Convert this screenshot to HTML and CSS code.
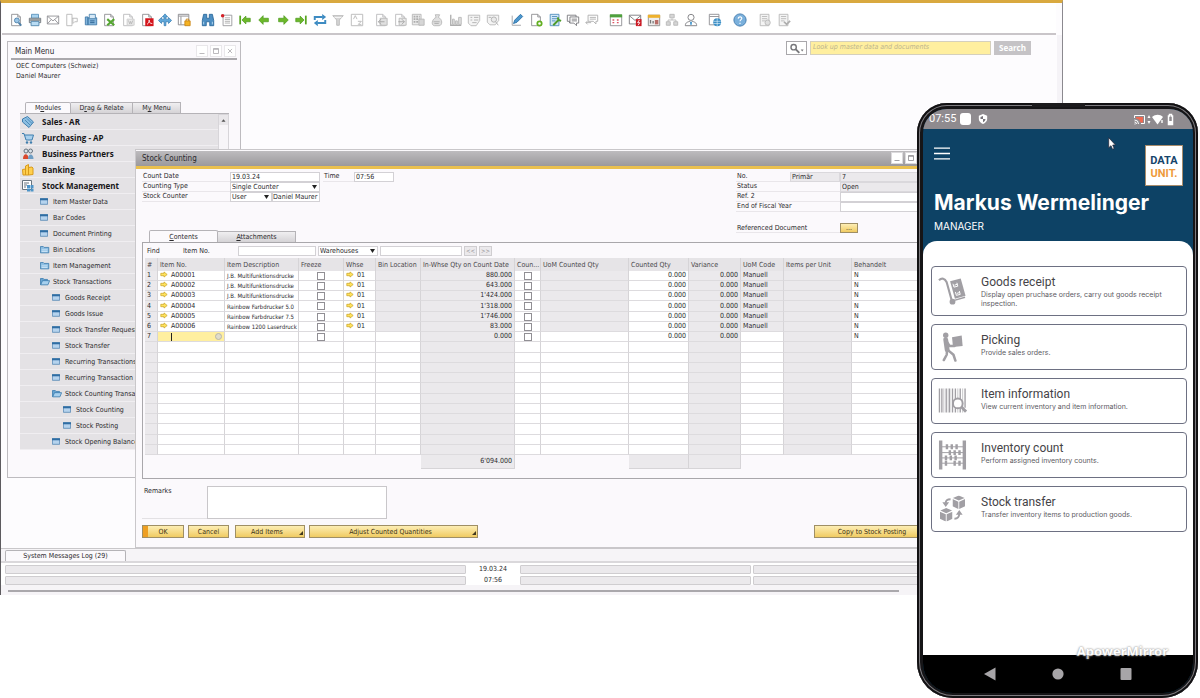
FILE: index.html
```html
<!DOCTYPE html>
<html lang="en">
<head>
<meta charset="utf-8">
<title>Stock Counting</title>
<link rel="stylesheet" href="styles.css">
</head>
<body>
<svg class="defs" aria-hidden="true">
  <symbol id="page" viewBox="0 0 16 16"><path d="M3 1.500h7l3 3v10H3z" fill="#fff" stroke="#8d8d90"/><path d="M10 1.500v3h3" fill="none" stroke="#8d8d90"/></symbol>
  <symbol id="win" viewBox="0 0 10 8"><path d="M.5.5h9v7h-9z" fill="#b5d3ee" stroke="#5487b2"/><path d="M0 0h10v2.500H0z" fill="#2f6da3"/></symbol>
  <symbol id="folder" viewBox="0 0 12 10"><path d="M.5 9V1.500h3.500l1 1h5.500V9z" fill="#8fbfe3" stroke="#3b7cae"/><path d="M2 5.500h7M2 7.500h7" stroke="#d8ecfa"/></symbol>
  <symbol id="open" viewBox="0 0 12 10"><path d="M.5 9V1.500h3.500l1 1h4V4" fill="#6aa6d2" stroke="#3b7cae"/><path d="M.8 9l2.200-5h8.500L9.500 9z" fill="#a7d0ee" stroke="#3b7cae"/></symbol>
  <symbol id="arrow" viewBox="0 0 10 8"><path d="M1 2.500h4V.8L9 4 5 7.200V5.500H1z" fill="#ffe45c" stroke="#c9a227" stroke-width=".9"/></symbol>
  <symbol id="left" viewBox="0 0 16 16"><path d="M2 8l5-5v3h6v4H7v3z" fill="#6cb82a" stroke="#4c9a1c" stroke-width=".8"/></symbol>
  <symbol id="cube" viewBox="0 0 14 15"><path d="M7 0l6.500 2.800L7 5.700.5 2.800z"/><path d="M0 4l6.500 2.900V15L0 12zM14 4L7.500 6.900V15L14 12z"/></symbol>
</svg>
<div class="desktop">
<main class="app">
  <nav class="toolbar" aria-label="Tools">
    <div class="group g10">
      <button aria-label="Preview"><svg viewBox="0 0 16 16"><use href="#page"/><circle cx="9" cy="8.500" r="2.800" fill="#9cc7e8" stroke="#4c7fa8"/><path d="M11 11l3 3.500" stroke="#4c7fa8" stroke-width="2"/></svg></button>
      <button aria-label="Print"><svg viewBox="0 0 16 16"><path d="M4 1.500h8V6H4z" fill="#a9d3ef" stroke="#5a91ba"/><path d="M1.500 6h13v5h-13z" fill="#d5dade" stroke="#6d7379"/><path d="M3.500 9.500h9v5h-9z" fill="#b9dcf4" stroke="#4d84ac"/><path d="M2 8h12" stroke="#555"/></svg></button>
      <button aria-label="E-mail"><svg viewBox="0 0 16 16" fill="none" stroke="#909095"><path d="M1.500 3.500h13v9h-13zM1.500 3.500L8 9l6.500-5.500M1.500 12.500L6 7.500M14.500 12.500L10 7.500"/></svg></button>
      <button class="off" aria-label="Message"><svg viewBox="0 0 16 16" fill="none" stroke="#888"><path d="M2 1.500h6v13H2zM8 6h6v4h-3l-2 2V6"/></svg></button>
      <button aria-label="Fax"><svg viewBox="0 0 16 16"><path d="M1.500 4.500h3v9h-3zM4.500 5.500h10v8h-10z" fill="#84b5dc" stroke="#3e78a8"/><path d="M6 1.500h7v5H6z" fill="#d6e9f7" stroke="#4b83ae"/><path d="M7 9h5M7 11h5" stroke="#285f8e"/></svg></button>
      <button aria-label="Export to Excel"><svg viewBox="0 0 16 16"><use href="#page"/><path d="M6 7l8 7M14 7l-8 7" stroke="#55a631" stroke-width="2.400"/></svg></button>
      <button class="off" aria-label="Export to Word"><svg viewBox="0 0 16 16"><use href="#page"/><path d="M7 7h8v7H7z" fill="#ddd" stroke="#aaa"/><path d="M8.500 8.500l1.500 4 1-3 1 3 1.500-4" fill="none" stroke="#888"/></svg></button>
      <button aria-label="Export to PDF"><svg viewBox="0 0 16 16"><use href="#page"/><path d="M6 6h9.500v9H6z" fill="#d4151d"/><path d="M8 13c3-2 3-5 2.500-5S10 12 14 12" fill="none" stroke="#fff"/></svg></button>
      <button aria-label="Launch application"><svg viewBox="0 0 16 16"><path d="M8 1l3 3.500H9V7h3V5l3.500 3.500L12 12v-2H9v4.500H7V10H4v2L.5 8.500 4 5v2h3V4.500H5z" fill="#5fa8da" stroke="#3079b0" stroke-width=".8"/></svg></button>
      <button aria-label="Lock screen"><svg viewBox="0 0 16 16"><path d="M1.500 1.500h12v12h-12z" fill="#fff" stroke="#858589"/><path d="M2 3.500h11M4.500 4v9" stroke="#858589"/><path d="M9 9h6v5.500H9z" fill="#f5b323" stroke="#c98512"/><path d="M10.500 9V7h3v2" fill="none" stroke="#c98512"/></svg></button>
    </div>
    <div class="group g9">
      <button aria-label="Find"><svg viewBox="0 0 16 16"><path d="M3 1.500h3.500V6h3V1.500H13l1.500 7v6H10V10H6v4.500H1.500v-6z" fill="#4d8fc3" stroke="#2b699b"/><path d="M3 10v3M13 10v3" stroke="#b7d8f0"/></svg></button>
      <button aria-label="Add"><svg viewBox="0 0 16 16"><path d="M3.500 2.500h10v12h-10z" fill="#fff" stroke="#96969a"/><path d="M5.500 5.500h6M5.500 7.500h6M5.500 9.500h6M5.500 11.500h6" stroke="#aaa"/><circle cx="3" cy="3" r="2" fill="#d42027"/></svg></button>
      <button aria-label="First record"><svg viewBox="0 0 16 16"><path d="M2.500 3v10" stroke="#58a522" stroke-width="2"/><path d="M4.500 8L9 3.500V6h5v4H9v2.500z" fill="#6cb82a" stroke="#4c9a1c" stroke-width=".8"/></svg></button>
      <button aria-label="Previous record"><svg viewBox="0 0 16 16"><use href="#left"/></svg></button>
      <button class="flip" aria-label="Next record"><svg viewBox="0 0 16 16"><use href="#left"/></svg></button>
      <button class="flip" aria-label="Last record"><svg viewBox="0 0 16 16"><path d="M2.500 3v10" stroke="#58a522" stroke-width="2"/><path d="M4.500 8L9 3.500V6h5v4H9v2.500z" fill="#6cb82a" stroke="#4c9a1c" stroke-width=".8"/></svg></button>
      <button aria-label="Refresh"><svg viewBox="0 0 16 16"><path d="M2 8V4.500h9M14 8v3.500H5" fill="none" stroke="#3d8bc2" stroke-width="2.200"/><path d="M10.500 1l4.500 3.500L10.500 8zM5.500 8L1 11.500 5.500 15z" fill="#3d8bc2"/></svg></button>
      <button class="off" aria-label="Filter"><svg viewBox="0 0 16 16"><path d="M2 3h12L9.500 8v6h-3V8z" fill="#bbb" stroke="#888"/><path d="M4 5h8" stroke="#fff"/></svg></button>
      <button class="off" aria-label="Sort"><svg viewBox="0 0 16 16" fill="none" stroke="#888"><path d="M1.500 1.500h13v13h-13zM4 7l2-4 2 4M9 9.500h4L9.500 13H13"/></svg></button>
    </div>
    <div class="group g7">
      <button class="off" aria-label="Base document"><svg viewBox="0 0 16 16"><use href="#page"/><path d="M7 6h8v8H7z" fill="#ccc" stroke="#888"/><path d="M12 10H5M8 7l-3 3 3 3" fill="none" stroke="#666"/></svg></button>
      <button class="off" aria-label="Target document"><svg viewBox="0 0 16 16"><use href="#page"/><path d="M7 6h8v8H7z" fill="#ddd" stroke="#888"/><path d="M6 10h7M10 7l3 3-3 3" fill="none" stroke="#666"/></svg></button>
      <button class="off" aria-label="Gross profit"><svg viewBox="0 0 16 16"><path d="M1.500 1.500h10v12h-10z" fill="#ddd" stroke="#888"/><path d="M3 4h7M3 7h7M3 10h7" stroke="#777" stroke-width="2" stroke-dasharray="2 1"/><path d="M9 7h6v7H9z" fill="#bbb" stroke="#888"/></svg></button>
      <button class="off" aria-label="Payment means"><svg viewBox="0 0 16 16"><path d="M6 2h5L9.500 5c5 2 5 9 1 9.500H5c-4-.5-3-7.500 2-9.500z" fill="#ccc" stroke="#888"/><path d="M4 10h7M5 12h5" stroke="#777"/></svg></button>
      <button class="off" aria-label="Volume and weight"><svg viewBox="0 0 16 16"><path d="M2 2v12h12" fill="none" stroke="#777" stroke-width="1.500"/><path d="M4 7h2v6H4zM7.500 9h2v4h-2zM11 5h3v8h-3z" fill="#ccc" stroke="#888"/></svg></button>
      <button class="off" aria-label="Transaction journal"><svg viewBox="0 0 16 16"><path d="M1.500 2.500h13v6l-4 6h-6l-3-3z" fill="#eee" stroke="#888"/><path d="M4 5h2M4 8h2M8 5h5M8 8h5M6 11h5" stroke="#777"/></svg></button>
      <button class="off" aria-label="Journal preview"><svg viewBox="0 0 16 16"><path d="M1.500 2.500h13v6l-4 5h-6l-3-3z" fill="#eee" stroke="#888"/><circle cx="9" cy="7.500" r="3" fill="#ddd" stroke="#777"/><path d="M11 10l3 4M3 5h3" stroke="#777"/></svg></button>
    </div>
    <div class="group g5">
      <button aria-label="Layout designer"><svg viewBox="0 0 16 16"><path d="M2.500 3v11h10" fill="none" stroke="#9a9a9e"/><path d="M4 12l1.500-4L12 1.500 14.500 4 8 10.500z" fill="#4c97ce" stroke="#2a6fa5"/></svg></button>
      <button aria-label="New document"><svg viewBox="0 0 16 16"><use href="#page"/><circle cx="12" cy="12" r="2.500" fill="#fff" stroke="#63b022" stroke-width="2"/></svg></button>
      <button aria-label="Form settings"><svg viewBox="0 0 16 16"><path d="M2.500 1.500h10v13h-10z" fill="#d4e8f7" stroke="#4d8cbb"/><path d="M4.500 4h6M4.500 6.500h6M4.500 9h4" stroke="#4d8cbb"/><path d="M6 14l6-6M11 5l1 3 3 1" stroke="#4f9b2c" stroke-width="2.200" fill="none"/></svg></button>
      <button aria-label="Messages"><svg viewBox="0 0 16 16" fill="#fff" stroke="#77777b"><path d="M1.500 2.500h10v7H6l-2 2v-2H1.500z"/><path d="M4.500 4.500h10v7H12v3l-3-3H4.500z"/><path d="M6.500 7h6M6.500 9h6"/></svg></button>
      <button class="off" aria-label="Notes"><svg viewBox="0 0 16 16" fill="#fff" stroke="#777"><path d="M3.500 2.500h11v7h-2v3l-3-3h-6z"/><path d="M5.500 5h7M5.500 7h7M1 11h6M3 9l-2 2 2 2" /></svg></button>
    </div>
    <div class="group g5">
      <button aria-label="Calendar"><svg viewBox="0 0 16 16"><path d="M1.500 2.500h13v12h-13z" fill="#fff" stroke="#8c8c90"/><path d="M1 1.500h14v3.500H1z" fill="#4fa13d"/><path d="M4 8h3M4 11h3M9 8h3M9 11h3" stroke="#d56" stroke-width="1.500" stroke-dasharray="2 1"/></svg></button>
      <button aria-label="Alerts"><svg viewBox="0 0 16 16"><path d="M1.500 2.500h13v10h-13zM1.500 3L8 8.500 14.500 3" fill="#fff" stroke="#77777b"/><path d="M9 7h6.500v8H9z" fill="#cb1a24"/><path d="M13 8l-2 3h2.500l-2 3" fill="none" stroke="#fff"/></svg></button>
      <button aria-label="Dashboard"><svg viewBox="0 0 16 16"><path d="M1.500 2.500h13v12h-13z" fill="#eee" stroke="#888"/><path d="M1 2h14v3.500H1z" fill="#eeb12c"/><path d="M4 12V8M7 12v-3" stroke="#777" stroke-width="1.500"/><path d="M9 8h4v5H9z" fill="#b86d68"/></svg></button>
      <button class="off" aria-label="Organization"><svg viewBox="0 0 16 16"><path d="M5.500 1.500h5v4h-5zM1.500 10h4.500v4H1.500zM10 10h4.500v4H10z" fill="#bbb" stroke="#888"/><path d="M8 6v2M3.500 10V8h9v2" fill="none" stroke="#888"/></svg></button>
      <button aria-label="User"><svg viewBox="0 0 16 16"><circle cx="8" cy="5" r="3.500" fill="#fff" stroke="#77777b"/><path d="M1.500 14.500c0-4 3-4 4.500-5l2 1.500 2-1.500c1.500 1 4.500 1 4.500 5z" fill="#fff" stroke="#77777b"/><path d="M8 10v3.500" stroke="#4a9bd1" stroke-width="2"/></svg></button>
    </div>
    <div class="group"><button aria-label="Web client"><svg viewBox="0 0 16 16"><path d="M1.500 1.500h11v12h-11z" fill="#fff" stroke="#8c8c90"/><path d="M2 4h10.500" stroke="#8c8c90"/><circle cx="10.500" cy="10.500" r="4.500" fill="#3c8fc6"/><path d="M6.500 9.500h8M6.500 12h8M10.500 6v9" stroke="#e5f3fc" stroke-width=".7"/></svg></button></div>
    <div class="group help"><button aria-label="Help"><svg viewBox="0 0 16 16"><circle cx="8" cy="8" r="7" fill="#7ab0dc" stroke="#3f78ab"/><path d="M6 6.500c0-3 4.500-2.500 4 0C9.800 7.500 8 7.800 8 9.500M8 11v1.500" fill="none" stroke="#fff" stroke-width="1.300"/></svg></button></div>
    <div class="group g2">
      <button class="off" aria-label="Previous task"><svg viewBox="0 0 16 16"><path d="M2.500 1.500h10v13h-10z" fill="#eee" stroke="#888"/><path d="M4.500 4h6M4.500 6.500h6M4.500 9h4" stroke="#888"/><circle cx="11" cy="11" r="3" fill="#ccc" stroke="#888"/></svg></button>
      <button class="off" aria-label="Next task"><svg viewBox="0 0 16 16"><path d="M2.500 1.500h10v13h-10z" fill="#eee" stroke="#888"/><path d="M4.500 4h6M4.500 6.500h6M4.500 9h4" stroke="#888"/><path d="M8 10l3 3 4-4" fill="none" stroke="#777" stroke-width="2"/></svg></button>
    </div>
  </nav>

  <div class="workspace">
    <form class="search">
      <button type="button" class="lens" aria-label="Search scope"><svg viewBox="0 0 20 14"><circle cx="7" cy="5.500" r="2.800" fill="none" stroke="#77777b" stroke-width="1.500"/><path d="M9 7.500l4 4" stroke="#77777b" stroke-width="2"/><path d="M14.500 8h3L16 10z" fill="#77777b"/></svg></button>
      <input type="text" aria-label="Look up master data and documents" placeholder="Look up master data and documents">
      <button type="button" class="go">Search</button>
    </form>

    <section class="window menu">
      <header class="menu-title"><h2>Main Menu</h2>
        <button aria-label="Minimize menu"><svg viewBox="0 0 12 12"><path d="M3 9h6"/></svg></button>
        <button aria-label="Maximize menu"><svg viewBox="0 0 12 12"><path d="M3 3h6v6H3zM3 4h6"/></svg></button>
        <button aria-label="Close menu"><svg viewBox="0 0 12 12"><path d="M3.500 3.500l5 5M8.500 3.500l-5 5"/></svg></button>
      </header>
      <p class="who">OEC Computers (Schweiz)<br>Daniel Maurer</p>
      <div class="tabs menu-tabs">
        <button class="active">M<u>o</u>dules</button><button>D<u>r</u>ag &amp; Relate</button><button>M<u>y</u> Menu</button>
      </div>
      <div class="tree-box">
        <ul class="tree">
          <li class="top"><svg viewBox="0 0 12 12"><path d="M.5 3l5-2.500L11.500 6 7 11.500.5 6z" fill="#8cbfe2" stroke="#3f7eae"/><path d="M3 4l5 5M5 2.500l5 5" stroke="#3f7eae" stroke-width=".8"/></svg>Sales - AR</li>
          <li class="top"><svg viewBox="0 0 12 12"><path d="M0 1.500h2l2 6.500h6l1.500-5h-9" fill="#a9d0ed" stroke="#3f7eae"/><circle cx="5" cy="10.500" r="1.200" fill="#3f7eae"/><circle cx="9" cy="10.500" r="1.200" fill="#3f7eae"/></svg>Purchasing - AP</li>
          <li class="top"><svg viewBox="0 0 12 12"><circle cx="4" cy="3" r="2" fill="#d9e2e9" stroke="#64717c"/><circle cx="8.500" cy="3" r="2" fill="#d9e2e9" stroke="#64717c"/><path d="M1 11c0-6 5-6 5.500-1V11z" fill="#d9482c"/><path d="M6 11c0-6 5.500-6 5.500 0z" fill="#6e9dc3"/></svg>Business Partners</li>
          <li class="top"><svg viewBox="0 0 12 12" fill="#ffcf4d" stroke="#d89a1b"><path d="M3.500 2l3-1.500V11h-3zM6.500 3.500L10 3l1 1v6.500L6.500 11zM.5 5.500l3-.5v6H1z"/></svg>Banking</li>
          <li class="top"><svg viewBox="0 0 12 12"><path d="M.5.5h9v9h-9z" fill="#fff" stroke="#68747e"/><path d="M2 3h5M2 5h3M2 7h2" stroke="#68747e"/><path d="M5 5h3v3H5zM8.500 5h3v3h-3zM5 8.500h3v3H5zM8.500 8.500h3v3h-3z" fill="#4d94c8"/></svg>Stock Management</li>
          <li class="l1"><svg class="w"><use href="#win"/></svg>Item Master Data</li>
          <li class="l1"><svg class="w"><use href="#win"/></svg>Bar Codes</li>
          <li class="l1"><svg class="w"><use href="#win"/></svg>Document Printing</li>
          <li class="l1"><svg class="f"><use href="#folder"/></svg>Bin Locations</li>
          <li class="l1"><svg class="f"><use href="#folder"/></svg>Item Management</li>
          <li class="l1"><svg class="f"><use href="#open"/></svg>Stock Transactions</li>
          <li class="l2"><svg class="w"><use href="#win"/></svg>Goods Receipt</li>
          <li class="l2"><svg class="w"><use href="#win"/></svg>Goods Issue</li>
          <li class="l2"><svg class="w"><use href="#win"/></svg>Stock Transfer Request</li>
          <li class="l2"><svg class="w"><use href="#win"/></svg>Stock Transfer</li>
          <li class="l2"><svg class="w"><use href="#win"/></svg>Recurring Transactions</li>
          <li class="l2"><svg class="w"><use href="#win"/></svg>Recurring Transaction</li>
          <li class="l2"><svg class="f"><use href="#open"/></svg>Stock Counting Transactions</li>
          <li class="l3"><svg class="w"><use href="#win"/></svg>Stock Counting</li>
          <li class="l3"><svg class="w"><use href="#win"/></svg>Stock Posting</li>
          <li class="l2"><svg class="w"><use href="#win"/></svg>Stock Opening Balance</li>
        </ul>
        <div class="scroll"><button aria-label="Scroll up"><svg viewBox="0 0 11 11"><path d="M3 7h5L5.500 4z" fill="#555"/></svg></button></div>
      </div>
    </section>

    <section class="window stock">
      <header class="stock-title"><h2>Stock Counting</h2>
        <button aria-label="Minimize"><svg viewBox="0 0 12 12"><path d="M3 9h6"/></svg></button>
        <button aria-label="Maximize"><svg viewBox="0 0 12 12"><path d="M3 3h6v6H3zM3 4h6"/></svg></button>
        <button aria-label="Close"><svg viewBox="0 0 12 12"><path d="M3.500 3.500l5 5M8.500 3.500l-5 5"/></svg></button>
      </header>
      <div class="stock-body">
        <div class="head">
          <div class="head-left">
            <div class="form">
              <div class="row"><label for="date">Count Date</label><input id="date" class="w90" value="19.03.24"><label for="time" class="time">Time</label><input id="time" class="w40" value="07:56"></div>
              <div class="row"><label for="type">Counting Type</label><span class="sel w90"><select id="type"><option>Single Counter</option></select></span></div>
              <div class="row"><label for="counter">Stock Counter</label><span class="sel w42"><select id="counter"><option>User</option></select></span><input class="w48" aria-label="Counter name" value="Daniel Maurer"></div>
            </div>
            <div class="tabs stock-tabs"><button class="active"><u>C</u>ontents</button><button><u>A</u>ttachments</button></div>
          </div>
          <div class="head-right">
            <div class="row"><label for="no">No.</label><input class="w50 ro" aria-label="Series" value="Primär" readonly><input id="no" class="grow ro" value="7" readonly></div>
            <div class="row"><label for="status" class="wide">Status</label><input id="status" class="grow ro" value="Open" readonly></div>
            <div class="row"><label for="ref" class="wide">Ref. 2</label><input id="ref" class="grow"></div>
            <div class="row"><label for="fiscal" class="wide">End of Fiscal Year</label><input id="fiscal" class="grow"></div>
            <div class="row refdoc"><span class="wide">Referenced Document</span><button class="gold dots" aria-label="Referenced Document">...</button></div>
          </div>
        </div>
        <div class="pane">
          <div class="find">
            <span class="f1">Find</span><label for="fitem" class="f2">Item No.</label><input id="fitem" class="w78">
            <span class="sel w60"><select aria-label="Find by"><option>Warehouses</option></select></span><input class="w82" aria-label="Warehouse">
            <button class="step">&lt;&lt;</button><button class="step">&gt;&gt;</button>
          </div>
          <table class="grid">
            <colgroup><col class="c13"><col class="c67"><col class="c74"><col class="c45"><col class="c32"><col class="c45"><col class="c94"><col class="c26"><col class="c88"><col class="c60"><col class="c52"><col class="c43"><col class="c68"><col></colgroup>
            <thead><tr><th>#</th><th>Item No.</th><th>Item Description</th><th>Freeze</th><th>Whse</th><th>Bin Location</th><th>In-Whse Qty on Count Date</th><th>Coun...</th><th>UoM Counted Qty</th><th>Counted Qty</th><th>Variance</th><th>UoM Code</th><th>Items per Unit</th><th>Behandelt</th></tr></thead>
            <tbody>
              <tr class="data"><td>1</td><td><svg><use href="#arrow"/></svg>A00001</td><td>J.B. Multifunktionsdrucke</td><td><input type="checkbox" aria-label="Freeze 1"></td><td><svg><use href="#arrow"/></svg>01</td><td></td><td>880.000</td><td><input type="checkbox" aria-label="Counted 1"></td><td></td><td>0.000</td><td>0.000</td><td>Manuell</td><td></td><td>N</td></tr>
              <tr class="data"><td>2</td><td><svg><use href="#arrow"/></svg>A00002</td><td>J.B. Multifunktionsdrucke</td><td><input type="checkbox" aria-label="Freeze 2"></td><td><svg><use href="#arrow"/></svg>01</td><td></td><td>643.000</td><td><input type="checkbox" aria-label="Counted 2"></td><td></td><td>0.000</td><td>0.000</td><td>Manuell</td><td></td><td>N</td></tr>
              <tr class="data"><td>3</td><td><svg><use href="#arrow"/></svg>A00003</td><td>J.B. Multifunktionsdrucke</td><td><input type="checkbox" aria-label="Freeze 3"></td><td><svg><use href="#arrow"/></svg>01</td><td></td><td>1'424.000</td><td><input type="checkbox" aria-label="Counted 3"></td><td></td><td>0.000</td><td>0.000</td><td>Manuell</td><td></td><td>N</td></tr>
              <tr class="data"><td>4</td><td><svg><use href="#arrow"/></svg>A00004</td><td>Rainbow Farbdrucker 5.0</td><td><input type="checkbox" aria-label="Freeze 4"></td><td><svg><use href="#arrow"/></svg>01</td><td></td><td>1'318.000</td><td><input type="checkbox" aria-label="Counted 4"></td><td></td><td>0.000</td><td>0.000</td><td>Manuell</td><td></td><td>N</td></tr>
              <tr class="data"><td>5</td><td><svg><use href="#arrow"/></svg>A00005</td><td>Rainbow Farbdrucker 7.5</td><td><input type="checkbox" aria-label="Freeze 5"></td><td><svg><use href="#arrow"/></svg>01</td><td></td><td>1'746.000</td><td><input type="checkbox" aria-label="Counted 5"></td><td></td><td>0.000</td><td>0.000</td><td>Manuell</td><td></td><td>N</td></tr>
              <tr class="data"><td>6</td><td><svg><use href="#arrow"/></svg>A00006</td><td>Rainbow 1200 Laserdruck</td><td><input type="checkbox" aria-label="Freeze 6"></td><td><svg><use href="#arrow"/></svg>01</td><td></td><td>83.000</td><td><input type="checkbox" aria-label="Counted 6"></td><td></td><td>0.000</td><td>0.000</td><td>Manuell</td><td></td><td>N</td></tr>
              <tr><td>7</td><td class="edit"><span class="editor"><i class="caret"></i><i class="pick"></i></span></td><td></td><td><input type="checkbox" aria-label="Freeze 7"></td><td></td><td></td><td>0.000</td><td><input type="checkbox" aria-label="Counted 7"></td><td></td><td>0.000</td><td>0.000</td><td></td><td></td><td>N</td></tr>
              <tr><td><td><td><td><td><td><td><td><td><td><td><td><td><td></tr>
              <tr><td><td><td><td><td><td><td><td><td><td><td><td><td><td></tr>
              <tr><td><td><td><td><td><td><td><td><td><td><td><td><td><td></tr>
              <tr><td><td><td><td><td><td><td><td><td><td><td><td><td><td></tr>
              <tr><td><td><td><td><td><td><td><td><td><td><td><td><td><td></tr>
              <tr><td><td><td><td><td><td><td><td><td><td><td><td><td><td></tr>
              <tr><td><td><td><td><td><td><td><td><td><td><td><td><td><td></tr>
              <tr><td><td><td><td><td><td><td><td><td><td><td><td><td><td></tr>
              <tr><td><td><td><td><td><td><td><td><td><td><td><td><td><td></tr>
              <tr><td><td><td><td><td><td><td><td><td><td><td><td><td><td></tr>
              <tr><td><td><td><td><td><td><td><td><td><td><td><td><td><td></tr>
            </tbody>
            <tfoot><tr><td colspan="6"></td><td class="sum">6'094.000</td><td colspan="2"></td><td class="sum"></td><td class="sum"></td><td colspan="3"></td></tr></tfoot>
          </table>
        </div>
        <div class="remarks"><label for="remarks">Remarks</label><textarea id="remarks"></textarea></div>
        <div class="actions">
          <button class="gold ok">OK</button><button class="gold cancel">Cancel</button><button class="gold add more">Add Items</button><button class="gold adjust more">Adjust Counted Quantities</button><button class="gold copy">Copy to Stock Posting</button>
        </div>
      </div>
    </section>
  </div>

  <footer class="status">
    <button class="log">System Messages Log (29)</button>
    <div class="bars">
      <span></span><time>19.03.24</time><span></span><span></span>
      <span></span><time>07:56</time><span></span><span></span>
    </div>
    <div class="rule"></div>
  </footer>
</main>

<aside class="phone">
  <i class="speaker"></i>
  <div class="screen">
    <div class="phone-status"><span>07:55</span><i class="chip"></i>
      <svg class="shield" viewBox="0 0 12 13"><path d="M6 .5L11 2.500v4c0 3-2.500 5-5 6-2.500-1-5-3-5-6v-4z" fill="#fff"/><path d="M6 3v3.500H3V4zM6 6.500h3c0 2-1.500 3-3 4z" fill="#77747a"/></svg>
      <svg class="signals" viewBox="0 0 42 13"><path d="M1.500 5V2.500h10v8H8M1.500 11h1M1.500 9a2 2 0 012 2M1.500 7a4 4 0 014 4" fill="none" stroke="#fff"/><path d="M3 4h7v5.500H7.500C7 7 5 5.500 3 5.500z" fill="#ef6a52"/><path d="M14.500 5l1.500-3 1.500 3zM14.500 8l1.500 3 1.500-3z" fill="#fff"/><path d="M19 4c3.500-3 8-3 11 0l-5.500 7.500z" fill="#fff"/><path d="M28 7h2v3h-2z" fill="#ddd"/><path d="M35.500 3h1V1.500h2V3h1v8.500h-4z" fill="none" stroke="#fff" stroke-width="1.500"/><path d="M36 8h3v3h-3z" fill="#fff"/></svg>
    </div>
    <header class="hero">
      <div class="hero-top">
        <button class="burger" aria-label="Menu"><svg viewBox="0 0 15 12"><path d="M0 1h15M0 6h15M0 11h15" stroke="#fff" stroke-width="1.200"/></svg></button>
        <div class="logo"><b>DATA</b><b>UNIT.</b></div>
      </div>
      <h1>Markus Wermelinger</h1>
      <p>MANAGER</p>
    </header>
    <div class="sheet">
      <a class="card tall" href="#"><svg viewBox="0 0 30 30"><path d="M1 4c3-3 6-2 8 2l5 18" fill="none" stroke="#a19fa4" stroke-width="2.200"/><path d="M12.500 5l11-3 5 18-11 3z"/><path d="M15.500 7.500l1 3.500 4-1-1-3.500M18 16l1 3.500 4-1-1-3.500M17 9l3-1M19.500 17.500l3-1" fill="none" stroke="#fff" stroke-width="1"/><circle cx="15" cy="26" r="3"/><path d="M16 25l12-3.500" stroke="#a19fa4" stroke-width="1.500"/></svg><span><strong>Goods receipt</strong><small>Display open pruchase orders, carry out goods receipt inspection.</small></span></a>
      <a class="card" href="#"><svg viewBox="0 0 30 30"><circle cx="8" cy="2.800" r="2.800"/><path d="M14.500 5l10-2 1 11-10 1z"/><path d="M8 7.500L9.500 18" fill="none" stroke="#a19fa4" stroke-width="5" stroke-linecap="round"/><path d="M8 8l4 6h5M9.500 18L9 23l-3 5.500M10 18l6 5 2 6" fill="none" stroke="#a19fa4" stroke-width="2.600" stroke-linecap="round" stroke-linejoin="round"/></svg><span><strong>Picking</strong><small>Provide sales orders.</small></span></a>
      <a class="card" href="#"><svg viewBox="0 0 30 30"><path d="M1.500 2v25M4 2v25M8.500 2v25M12 2v25M15 2v25M18 2v25M23 2v25M28 2v20" stroke="#a19fa4" stroke-width="1.400"/><path d="M6 2v25M10.500 2v25M20.500 2v25M25.500 2v25" stroke="#a19fa4" stroke-width=".6"/><circle cx="20.500" cy="17.500" r="5" fill="#fff" stroke="#a19fa4" stroke-width="2"/><path d="M24 21l5 5" stroke="#a19fa4" stroke-width="3"/></svg><span><strong>Item information</strong><small>View current inventory and item information.</small></span></a>
      <a class="card" href="#"><svg viewBox="0 0 30 30"><path d="M1 0h3.500v30H1zM25.500 0H29v30h-3.500z"/><path d="M4 6.500h22M4 12.500h22M4 18h22M4 23.500h22" stroke="#a19fa4"/><path d="M8 4h2.500v5H8zM13 4h2.500v5H13zM18 4h2.500v5H18zM11 10h2.500v5H11zM16 10h2.500v5H16zM21 10h2.500v5H21zM7 15.500h2.500v5H7zM12 15.500h2.500v5H12zM17 15.500h2.500v5H17zM7 21h2.500v5H7zM16 21h2.500v5H16zM21 21h2.500v5H21z"/></svg><span><strong>Inventory count</strong><small>Perform assigned inventory counts.</small></span></a>
      <a class="card" href="#"><svg viewBox="0 0 30 30"><use href="#cube" x="15" y="1" width="13" height="14"/><use href="#cube" x="2" y="14" width="13" height="14"/><path d="M13 5C9 5 8 6 8 9M17 25c4 0 5-2 5-5" fill="none" stroke="#a19fa4" stroke-width="2"/><path d="M4.500 8h7L8 13zM18.500 21h7L22 16z"/></svg><span><strong>Stock transfer</strong><small>Transfer inventory items to production goods.</small></span></a>
    </div>
    <nav class="phone-nav">
      <button aria-label="Back"><svg viewBox="0 0 14 14"><path d="M1 7l11.500-6.500v13z"/></svg></button>
      <button aria-label="Home"><svg viewBox="0 0 14 14"><circle cx="7" cy="7" r="5.600"/></svg></button>
      <button aria-label="Recent apps"><svg viewBox="0 0 14 14"><rect x="1.500" y="1" width="11" height="12" rx="1"/></svg></button>
    </nav>
  </div>
  <svg class="cursor" viewBox="0 0 8 13"><path d="M.7.7v10l2.300-2 1.500 3.500 1.700-.7L4.700 8h2.800z" fill="#fff" stroke="#223" stroke-width=".7"/></svg>
  <span class="mark">ApowerMirror</span>
</aside>
</div>
</body>
</html>
```
FILE: styles.css
```css
* { box-sizing: border-box; }
body { margin: 0; background: #fff; color: #2b2a2d; font: 7px/10px "DejaVu Sans Condensed", "DejaVu Sans", sans-serif; }
h1, h2, p, ul { margin: 0; padding: 0; font-weight: normal; }
button, input, select, textarea { margin: 0; padding: 0; font: inherit; color: inherit; border-radius: 0; }
button { background: none; border: 0; white-space: nowrap; }
svg { display: block; flex: none; }
.defs { position: absolute; width: 0; height: 0; }
.desktop { position: relative; min-height: 100vh; overflow: hidden; }

.app { display: flex; flex-direction: column; margin-right: 137px; border-left: 1px solid #5d5b5f; border-right: 1px solid #8b898f; border-top: 3px solid #d9a93f; background: #fdfcfe; }
.toolbar { display: flex; gap: 8px; height: 32px; margin: 0 6px 0 1px; padding: 9px 0 0 6px; border-bottom: 2px solid #c9c5c9; background: #fff; }
.group { display: flex; justify-content: space-between; height: 16px; }
.group button { width: 16px; height: 16px; padding: 1px; }
.group svg { width: 14px; height: 14px; }
.group .off { opacity: .6; }
.group .flip svg { transform: scaleX(-1); }
.g10 { width: 184px; }
.g9 { width: 165px; }
.g7 { width: 128px; }
.g5 { width: 91px; }
.g2 { width: 35px; }
.help, .g2 { margin-left: 1px; }

.workspace { position: relative; height: 513px; padding: 6px 26px 0 0; border-right: 5px solid #f5f3f7; }
.search { display: flex; justify-content: flex-end; gap: 3px; }
.search .lens { width: 21px; height: 14px; border: 1px solid #a9a7ab; background: #fff; }
.search input { width: 181px; height: 14px; padding: 0 2px 3px; border: 1px solid #d5d0bd; background: #ffef9f; font-style: italic; }
.search input::placeholder { color: #bcb48e; opacity: 1; }
.search .go { width: 37px; height: 14px; background: #c5c3c6; color: #fff; font: bold 8px/14px "Open Sans", sans-serif; }

.window { position: absolute; background: #fbf9fc; }
.window h2 { flex: 1; font-size: 8px; line-height: 14px; }
.window header button { width: 12px; height: 12px; border: 1px solid #dcdadd; background: #fff; }
.window header svg { width: 10px; height: 10px; fill: none; stroke: #908e93; }
.menu { left: 6px; top: 6px; width: 234px; padding: 3px 3px 27px; border: 1px solid #bdbbbf; }
.menu-title { display: flex; gap: 2px; height: 15px; padding: 0 1px 0 4px; border-bottom: 2px solid #aaa8ac; }
.menu .menu-title button { border-color: #e9e7ea; }
.menu .menu-title svg { stroke: #aeacb0; }
.who { padding: 1px 5px 21px; }
.tabs { display: flex; align-items: flex-end; }
.tabs button { height: 11px; border: 1px solid #b5b3b7; border-left-width: 0; border-bottom: 0; background: linear-gradient(#f0eff1, #d5d3d6); }
.tabs .active { border-left-width: 1px; border-radius: 2px 2px 0 0; background: #fbf9fc; }
.menu-tabs { padding-left: 14px; }
.menu-tabs button { width: 48px; }
.menu-tabs .active { width: 46px; }
.menu-tabs button:nth-child(2) { width: 62px; }
.tree-box { display: flex; margin: 0 8px 0 9px; border-top: 1px solid #b5b3b7; }
.tree { flex: 1; list-style: none; background: #e4e2e5; }
.tree li { display: flex; align-items: center; gap: 5px; height: 16px; border-bottom: 1px solid #f0eef1; white-space: nowrap; }
.tree .top { gap: 8px; padding-left: 2px; font: bold 8px/12px "Open Sans", sans-serif; color: #161517; }
.top svg { width: 12px; height: 12px; }
.tree .l1 { padding-left: 20px; }
.tree .l2 { padding-left: 32px; }
.tree .l3 { padding-left: 43px; }
.w { width: 8px; height: 7px; }
.f { width: 10px; height: 9px; }
.tree .f { margin-right: -2px; }
.scroll { width: 11px; border: 1px solid #d7d5d9; background: #f7f5f8; }
.scroll button { width: 9px; height: 10px; background: #e9e7ea; }

.stock { left: 134px; top: 114px; right: 123px; border: 1px solid #c9c7ca; border-bottom: 2px solid #c9c7ca; }
.stock-title { display: flex; gap: 2px; height: 18px; margin-top: 1px; padding: 1px 2px 0 6px; border-bottom: 3px solid #eac04f; background: linear-gradient(#bdbbbe, #9b999c); }
.stock-body { padding: 3px 0 9px 6px; }
.head { display: flex; justify-content: space-between; }
.head-left { display: flex; flex-direction: column; justify-content: space-between; }
.row { display: flex; height: 10px; }
.row label, .row > span.wide { border-bottom: 1px solid #e9e6ea; padding-left: 1px; }
.head-left label { width: 88px; line-height: 9px; }
.head-left .time { width: 31px; margin-left: 3px; }
.head-right label { width: 54px; line-height: 9px; }
.head-right .wide { width: 104px; }
.head-right { width: 197px; padding-bottom: 9px; }
.refdoc { margin-top: 11px; }
.row input, .find input { height: 10px; padding: 0 1px; border: 1px solid #d3d1d5; background: #fff; }
.row .ro { background: #ebe9ec; border-color: #dad8dc; }
.row .grow { flex: 1; min-width: 0; }
.sel { position: relative; height: 10px; border: 1px solid #d3d1d5; background: #fff; }
.sel select { display: block; width: 100%; height: 8px; line-height: 8px; padding-left: 1px; border: 0; background: none; appearance: none; }
.sel::after { content: ""; position: absolute; right: 2px; top: 2px; width: 5px; height: 4px; background: #222; clip-path: polygon(0 0, 100% 0, 50% 100%); pointer-events: none; }
.w90 { width: 90px; }
.w40 { width: 40px; }
.w42 { width: 42px; }
.row .w48 { width: 48px; padding: 0; }
.w50 { width: 50px; }
.w78 { width: 78px; }
.w60 { width: 60px; }
.w82 { width: 82px; }
.stock-tabs { padding-left: 7px; }
.stock-tabs button { width: 78px; }
.stock-tabs .active { width: 69px; height: 12px; }

.pane { padding: 3px 0 9px 2px; border: 1px solid #a9a7ab; border-right: 0; }
.find { display: flex; gap: 2px; margin-bottom: 2px; padding-left: 2px; }
.f1 { width: 34px; }
.f2 { width: 53px; }
.step { width: 13px; height: 10px; border: 1px solid #cfcdd0; background: #ebe9ec; color: #8b898d; font-size: 6px; line-height: 8px; }
.grid { width: 100%; table-layout: fixed; border-collapse: separate; border-spacing: 0; }
.c13 { width: 13px; }
.c67 { width: 67px; }
.c74 { width: 74px; }
.c45 { width: 45px; }
.c32 { width: 32px; }
.c94 { width: 94px; }
.c26 { width: 26px; }
.c88 { width: 88px; }
.c60 { width: 60px; }
.c52 { width: 52px; }
.c43 { width: 43px; }
.c68 { width: 68px; }
.grid th { height: 13px; padding: 0 2px; background: #e6e4e7; border-right: 1px solid #d6d4d7; font-weight: normal; text-align: left; white-space: nowrap; color: #4a484c; }
.grid td { height: 10px; padding: 0 2px; line-height: 9px; background: #fff; border-right: 1px solid #d6d4d7; border-bottom: 1px solid #dddbde; white-space: nowrap; }
.grid tbody tr:nth-child(4n) td { height: 11px; }
.grid tbody td:nth-child(1), .grid tbody td:nth-child(7), .grid tbody td:nth-child(11), .grid tbody td:nth-child(13),
.grid .data td:nth-child(6), .grid .data td:nth-child(9), .grid .data td:nth-child(12) { background: #ebe9ec; }
.grid td:nth-child(7), .grid td:nth-child(10), .grid td:nth-child(11) { text-align: right; }
.grid .data td:nth-child(3) { padding-right: 0; font-size: 6px; }
.grid td svg { display: inline-block; width: 8px; height: 7px; margin-right: 3px; vertical-align: -1px; }
.grid td:nth-child(4), .grid td:nth-child(8) { text-align: center; }
.grid input { display: block; appearance: none; width: 8px; height: 8px; margin: 0 auto; border: 1px solid #918f94; background: #fff; }
.grid tbody .edit { background: #ffef9f; }
.editor { display: flex; justify-content: space-between; padding-left: 11px; }
.caret { width: 1px; height: 8px; background: #222; }
.pick { width: 7px; height: 7px; border: 1px solid #b9b7a8; border-radius: 50%; background: #dfdccb; }
.grid tfoot td { height: 14px; border-color: transparent; background: none; text-align: right; }
.grid tfoot .sum { background: #ebe9ec; border-color: #d6d4d7; }

.remarks { display: flex; height: 33px; margin-top: 7px; }
.remarks label { width: 65px; padding-left: 2px; border-bottom: 1px solid #e3e1e4; }
.remarks textarea { width: 180px; height: 33px; border: 1px solid #c9c7ca; background: #fff; resize: none; }
.actions { display: flex; margin-top: 6px; padding-right: 3px; }
.gold { position: relative; height: 13px; border: 1px solid #9f8f65; background: linear-gradient(#fdeeb4, #f0cb62); color: #3d3315; line-height: 10px; }
.ok { width: 42px; margin-right: 4px; background: linear-gradient(90deg, #ee9f22 5px, transparent 5px), linear-gradient(#fdeeb4, #f0cb62); }
.cancel { width: 41px; margin-right: 6px; }
.add { width: 70px; padding-right: 6px; margin-right: 4px; }
.adjust { width: 169px; padding-right: 6px; }
.copy { width: 116px; margin-left: auto; }
.more::after { content: ""; position: absolute; right: 1px; bottom: 2px; width: 4px; height: 4px; background: #40381e; clip-path: polygon(100% 0, 100% 100%, 0 100%); }
.dots { width: 18px; height: 10px; line-height: 6px; }

.status { height: 47px; border-top: 1px solid #c9c7ca; background: #f6f4f7; }
.log { display: block; width: 121px; height: 11px; margin: 1px 0 0 4px; border: 1px solid #b5b3b7; border-bottom: 0; border-radius: 2px 2px 0 0; background: #fbf9fc; }
.bars { display: grid; grid-template-columns: 461px 1fr 231px 309px; gap: 2px; padding: 2px 0 0 4px; border-top: 2px solid #dad8db; background: #fff; }
.bars span { height: 9px; border: 1px solid #cfcdd0; border-radius: 1px; background: #ebe9ec; }
.bars time { text-align: center; line-height: 9px; }
.rule { width: 84%; height: 2px; margin: 5px 0 0 7px; background: #aaa8ac; }

.phone { position: absolute; top: 103px; right: 2px; bottom: 0; width: 281px; padding: 6px 5px 5px 6px; border-radius: 30px 30px 36px 36px; background: #161517; box-shadow: inset 0 0 0 2px #121113, inset 0 0 0 3px #7d7b7f; font-family: Inter, "Open Sans", sans-serif; }
.speaker { position: absolute; left: 115px; top: 0; width: 53px; height: 4px; background: #1c1b1d; }
.screen { display: flex; flex-direction: column; height: 100%; border-radius: 24px 24px 30px 30px; overflow: hidden; background: #0d4265; }
.phone-status { display: flex; align-items: center; height: 20px; padding: 0 18px 0 6px; background: #8f8b8f; color: #fff; font: 11px/20px Roboto, sans-serif; }
.chip { width: 11px; height: 12px; margin: 0 7px 0 4px; border-radius: 3px; background: #fff; }
.shield { width: 10px; height: 12px; }
.signals { width: 42px; height: 13px; margin-left: auto; }
.hero { padding: 16px 10px 8px 11px; color: #fff; }
.hero-top { display: flex; justify-content: space-between; height: 42px; }
.burger { width: 16px; height: 16px; }
.burger svg { width: 16px; height: 13px; }
.logo { width: 38px; height: 41px; padding-top: 8px; border: 1px solid #a98c6b; background: #fff; text-align: center; font: 11px/13px Roboto, sans-serif; color: #16456b; }
.logo b { display: block; }
.logo b + b { color: #ee9a3a; }
.hero h1 { font-size: 21px; line-height: 32px; font-weight: 700; white-space: nowrap; }
.hero p { font-size: 10px; line-height: 14px; }
.sheet { flex: 1; display: flex; flex-direction: column; gap: 8px; padding: 25px 6px 0 8px; border-radius: 14px 14px 0 0; background: #fff; }
.card { display: flex; align-items: center; min-height: 46px; padding: 0 12px 0 6px; border: 1px solid #6d7082; border-radius: 4px; color: #454347; text-decoration: none; }
.card svg { width: 29px; height: 30px; margin-right: 14px; fill: #a19fa4; }
.card span { flex: 1; padding-bottom: 5px; }
.tall { min-height: 50px; }
.tall span { padding-bottom: 0; }
.card strong, .card small { display: block; }
.card strong { font: 12px/15px Roboto, sans-serif; }
.card small { font-size: 7px; line-height: 9px; color: #5c5a5f; }
.phone-nav { display: flex; justify-content: center; gap: 54px; height: 38px; padding-top: 12px; background: #000; }
.phone-nav button { width: 14px; height: 14px; }
.phone-nav svg { width: 14px; height: 14px; fill: #a7a5a8; }
.cursor { position: absolute; left: 191px; top: 34px; width: 8px; height: 13px; }
.mark { position: absolute; right: 30px; bottom: 38px; color: #fff; opacity: .75; font: bold 13px/18px "Noto Sans", sans-serif; text-shadow: 0 0 2px #777, 0 0 2px #999; }
```
